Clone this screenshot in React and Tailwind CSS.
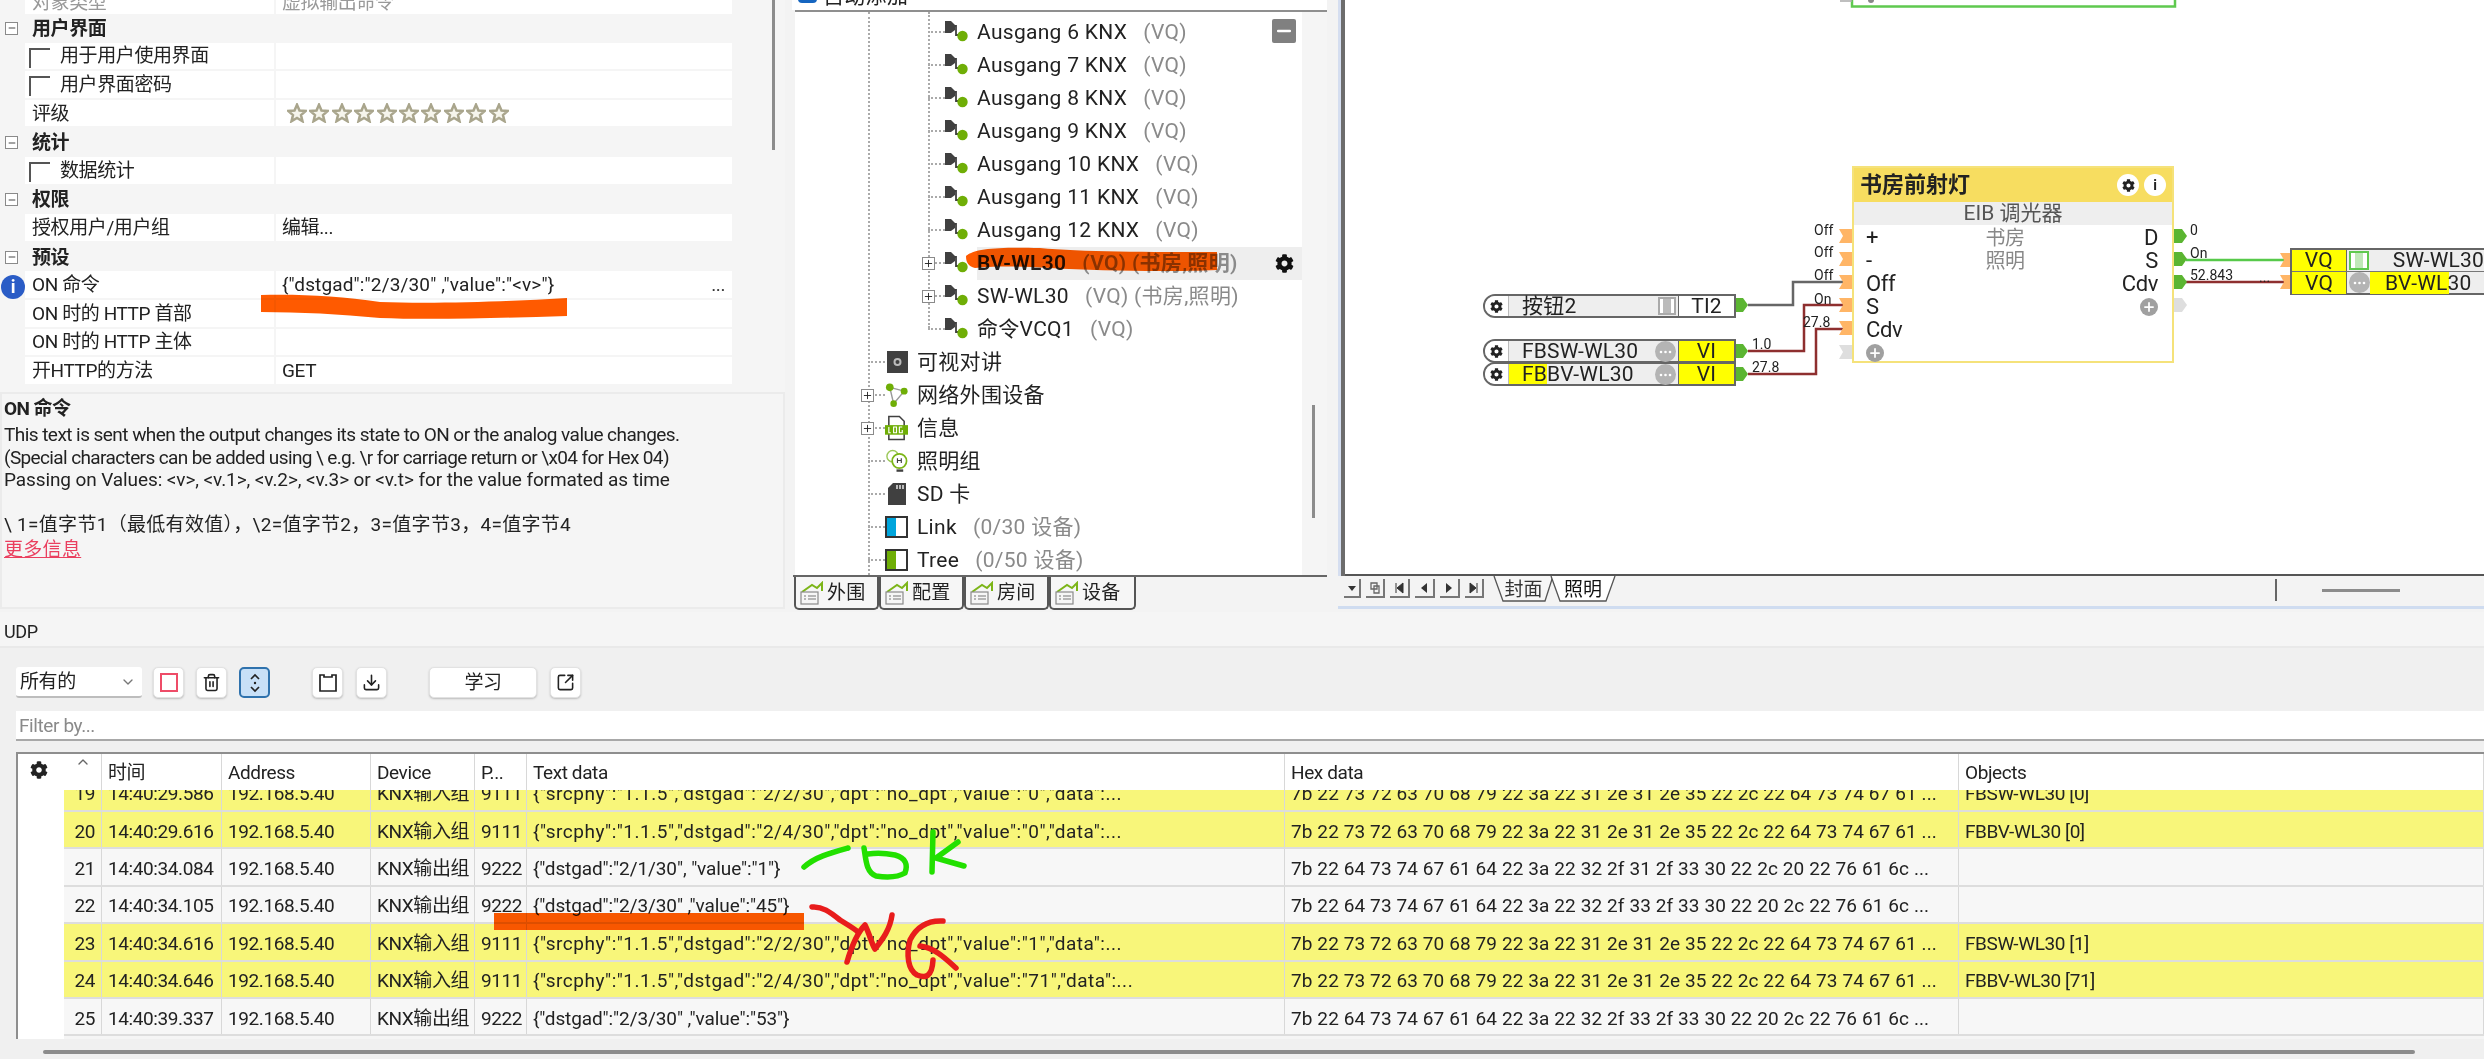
import React from 'react';
import { FaCog } from 'react-icons/fa';
import { ChevronDown, ChevronUp, Trash2, Download, SquareArrowOutUpRight, Plus, Minus } from 'lucide-react';

const Box = ({ minus }) => (
  <span className="flex h-[13px] w-[13px] items-center justify-center border border-[#8a8a8a] bg-white text-[#222]">
    {minus ? <Minus size={10} strokeWidth={2} /> : <Plus size={11} strokeWidth={2} />}
  </span>
);

const Star = () => (
  <svg width="20" height="20" viewBox="0 0 24 24" className="mr-[2.4px]">
    <path d="M12 2l3 7 7.5.6-5.7 4.9 1.8 7.4L12 18l-6.6 3.9 1.8-7.4L1.5 9.6 9 9z" fill="#f6f5ec" stroke="#a9a58c" strokeWidth="3" />
  </svg>
);

const Header = ({ t }) => (
  <div className="flex h-[28.6px] items-center bg-[#f5f5f5]">
    <div className="flex w-[32px] shrink-0 pl-[5px]"><Box minus /></div>
    <span className="font-bold">{t}</span>
  </div>
);

const Row = ({ l, v, check, children, info }) => (
  <div className="relative flex h-[28.6px] border-b-2 border-[#f5f5f5] bg-[#f5f5f5]">
    <div className="w-[25px] shrink-0" />
    <div className="flex w-[249px] shrink-0 items-center bg-white pl-[7px]">
      {check && <span className="mr-[10px] -ml-[3px] mt-[4px] h-[20px] w-[21px] border-l-2 border-t-2 border-[#555]" />}
      <span className={info ? 'relative z-10' : ''}>{l}</span>
    </div>
    <div className="w-[2px] shrink-0" />
    <div className="flex w-[456px] shrink-0 items-center bg-white pl-[6px]">{v}{children}</div>
  </div>
);

const OutIcon = () => (
  <svg width="23" height="24" viewBox="0 0 23 24" className="shrink-0">
    <path d="M0 1h6l4 4v5l-4 3H0z" fill="#404040" />
    <path d="M9 6h2v9h6" fill="none" stroke="#404040" strokeWidth="1.8" />
    <circle cx="17.5" cy="16" r="5.2" fill="#6fae06" />
  </svg>
);

const DotStub = () => <span className="h-0 w-[17px] shrink-0 border-t-2 border-dotted border-[#aaa]" />;

const Gray = ({ children }) => <span className="ml-[5px] text-[#8a8a8a]"> {children}</span>;

const L3 = ({ name, sub, plus, active }) => (
  <div className="relative flex h-[33px] items-center pl-[133px]">
    <DotStub />
    <OutIcon />
    {plus && <span className="absolute left-[127px] top-[10px]"><Box /></span>}
    <div className={active ? 'ml-[9px] flex h-[33px] flex-1 items-center bg-[#eeeeee] font-semibold' : 'ml-[9px] flex items-center'}>
      <span className="whitespace-pre">{name} <Gray>{sub}</Gray></span>
      {active && <FaCog className="ml-auto mr-[8px] text-[#111]" size={19} />}
    </div>
  </div>
);

const L2 = ({ icon, name, sub, plus }) => (
  <div className="relative flex h-[33px] items-center pl-[73px]">
    <DotStub />
    <span className="flex w-[23px] shrink-0 items-center justify-center">{icon}</span>
    {plus && <span className="absolute left-[66px] top-[10px]"><Box /></span>}
    <span className="ml-[9px] whitespace-pre">{name}{sub ? <Gray> {sub}</Gray> : null}</span>
  </div>
);

const IconCam = () => (
  <svg width="22" height="24" viewBox="0 0 22 24"><rect x="1" y="1" width="21" height="22" fill="#404040" /><circle cx="11.5" cy="12" r="3" fill="none" stroke="#bbb" strokeWidth="2" /></svg>
);
const IconNet = () => (
  <svg width="24" height="26" viewBox="0 0 24 26"><path d="M5 5L20 9 9 22z" fill="none" stroke="#999" strokeWidth="1.5" /><circle cx="5" cy="5" r="4" fill="#6fae06" /><circle cx="20" cy="9" r="3.6" fill="#6fae06" /><circle cx="9" cy="22" r="3.4" fill="#6fae06" /></svg>
);
const IconLog = () => (
  <svg width="24" height="26" viewBox="0 0 24 26"><path d="M4 1h11l5 5v19H4z" fill="#fff" stroke="#404040" strokeWidth="1.6" /><rect x="0" y="10" width="24" height="10" fill="#6fae06" /><path d="M4 12v6h2M9 12h3v6H9zM18 12h-3v6h3v-3" fill="none" stroke="#fff" strokeWidth="1.2" /></svg>
);
const IconBulb = () => (
  <svg width="24" height="26" viewBox="0 0 24 26"><circle cx="8" cy="8" r="6" fill="none" stroke="#9cc85a" strokeWidth="1.5" /><circle cx="15" cy="13" r="7.5" fill="#fff" stroke="#7cb518" strokeWidth="1.8" /><path d="M12 23h7" stroke="#404040" strokeWidth="2.5" /><path d="M13 10v5M17 10v5M13 12.5h4" stroke="#404040" strokeWidth="1.2" /></svg>
);
const IconSD = () => (
  <svg width="20" height="24" viewBox="0 0 20 24"><path d="M6 1h13v22H1V6z" fill="#404040" /><path d="M10 3v4M13 3v4M16 3v4" stroke="#fff" strokeWidth="1.3" /></svg>
);
const IconSplit = ({ c }) => (
  <span className="flex h-[22px] w-[23px] border-2 border-[#333] bg-white">
    <span className={c} />
  </span>
);

const TabIcon = () => (
  <svg width="24" height="24" viewBox="0 0 24 24" className="shrink-0">
    <path d="M2 11L12 4l5 3 5-5v8" fill="none" stroke="#7cb518" strokeWidth="2" />
    <rect x="1" y="11" width="17" height="12" fill="#f6f6f6" stroke="#8a8a8a" strokeWidth="1.2" />
    <path d="M4 15h2M8 15h8M4 18h2M8 18h8" stroke="#777" strokeWidth="1.2" />
  </svg>
);
const TreeTab = ({ t, w }) => (
  <div className={`${w} flex h-[33px] items-center gap-[3px] rounded-b-[5px] border-x-2 border-b-2 border-[#555] bg-[#f6f6f6] pl-[4px] text-[19px]`}>
    <TabIcon />
    {t}
  </div>
);

const NavBtn = ({ w, children }) => (
  <span className={`${w} flex h-[19px] shrink-0 items-center justify-center border-b-2 border-r-2 border-[#777] bg-[#f3f3f3]`}>
    <svg width="12" height="14" viewBox="0 0 12 14">{children}</svg>
  </span>
);

const ToolBtn = ({ w = 'w-[31px]', active, children }) => (
  <button className={`flex h-[31px] ${w} items-center justify-center rounded-[5px] ${active ? 'border-2 border-[#2f72ad] bg-[#c8e0f7]' : 'border border-[#e2e2e2] bg-white shadow-[0_1px_2px_#bbb]'} text-[#222]`}>
    {children}
  </button>
);

const Lbl = ({ className, children }) => <div className={`absolute whitespace-nowrap ${className}`}>{children}</div>;

const GearCap = () => (
  <span className="flex h-full w-[24px] shrink-0 items-center justify-center rounded-l-full border-r border-[#bbb] bg-white">
    <FaCog size={13} className="text-[#222]" />
  </span>
);
const Dots = () => (
  <span className="flex h-[21px] w-[21px] shrink-0 items-center justify-center rounded-full bg-[#b4b4b4]">
    <svg width="13" height="4" viewBox="0 0 13 4"><circle cx="2" cy="2" r="1.3" fill="#fff" /><circle cx="6.5" cy="2" r="1.3" fill="#fff" /><circle cx="11" cy="2" r="1.3" fill="#fff" /></svg>
  </span>
);

const HEX_A = '7b 22 73 72 63 70 68 79 22 3a 22 31 2e 31 2e 35 22 2c 22 64 73 74 67 61 ...';
const HEX_B = '7b 22 64 73 74 67 61 64 22 3a 22 32 2f 31 2f 33 30 22 2c 20 22 76 61 6c ...';
const HEX_C = '7b 22 64 73 74 67 61 64 22 3a 22 32 2f 33 2f 33 30 22 20 2c 22 76 61 6c ...';

const rows = [
  ['19', '14:40:29.586', 'KNX输入组', '9111', '{"srcphy":"1.1.5","dstgad":"2/2/30","dpt":"no_dpt","value":"0","data":...', HEX_A, 'FBSW-WL30 [0]', true],
  ['20', '14:40:29.616', 'KNX输入组', '9111', '{"srcphy":"1.1.5","dstgad":"2/4/30","dpt":"no_dpt","value":"0","data":...', HEX_A, 'FBBV-WL30 [0]', true],
  ['21', '14:40:34.084', 'KNX输出组', '9222', '{"dstgad":"2/1/30", "value":"1"}', HEX_B, '', false],
  ['22', '14:40:34.105', 'KNX输出组', '9222', '{"dstgad":"2/3/30" ,"value":"45"}', HEX_C, '', false],
  ['23', '14:40:34.616', 'KNX输入组', '9111', '{"srcphy":"1.1.5","dstgad":"2/2/30","dpt":"no_dpt","value":"1","data":...', HEX_A, 'FBSW-WL30 [1]', true],
  ['24', '14:40:34.646', 'KNX输入组', '9111', '{"srcphy":"1.1.5","dstgad":"2/4/30","dpt":"no_dpt","value":"71","data":...', HEX_A, 'FBBV-WL30 [71]', true],
  ['25', '14:40:39.337', 'KNX输出组', '9222', '{"dstgad":"2/3/30" ,"value":"53"}', HEX_C, '', false],
];

const GRID = 'grid grid-cols-[38px_120px_149px_104px_52px_758px_674px_1fr]';
const Cell = ({ className = '', children }) => (
  <div className={`flex items-center overflow-hidden whitespace-nowrap border-r-[1.5px] border-[#d8d8d8] pl-[6px] ${className}`}>{children}</div>
);
const DataCell = ({ className = '', children }) => <Cell className={`pt-[3px] ${className}`}>{children}</Cell>;

export default function App() {
  return (
    <div className="relative h-[1059px] w-[2484px] overflow-hidden bg-[#f3f3f3] font-['Roboto','Noto_Sans_CJK_SC',sans-serif] text-[19px] leading-none tracking-[-0.4px] text-[#222] blur-[0.4px]">
      {/* top */}
      <div className="flex h-[612px]">
        {/* property column */}
        <div className="flex w-[785px] shrink-0 flex-col">
          <div className="relative h-[392px] overflow-hidden bg-[#f5f5f5]">
            <div className="flex h-[14px] overflow-hidden bg-[#f5f5f5]">
              <div className="w-[25px]" />
              <div className="h-[14px] w-[249px] overflow-hidden bg-white pl-[7px] text-[#999]"><div className="-mt-[7px]">对象类型</div></div>
              <div className="w-[2px]" />
              <div className="h-[14px] w-[456px] overflow-hidden bg-white pl-[6px] text-[#999]"><div className="-mt-[7px]">虚拟输出命令</div></div>
            </div>
            <Header t="用户界面" />
            <Row l="用于用户使用界面" check />
            <Row l="用户界面密码" check />
            <Row l="评级">
              <div className="flex pl-[5px]">{[0,1,2,3,4,5,6,7,8,9].map(i => <Star key={i} />)}</div>
            </Row>
            <Header t="统计" />
            <Row l="数据统计" check />
            <Header t="权限" />
            <Row l="授权用户/用户组" v="编辑..." />
            <Header t="预设" />
            <Row l="ON 命令" v={<span className="tracking-[0.15px]">{'{"dstgad":"2/3/30" ,"value":"<v>"}'}</span>} info>
              <span className="ml-auto mr-[7px] text-[#333]">...</span>
            </Row>
            <Row l="ON 时的 HTTP 首部" />
            <Row l="ON 时的 HTTP 主体" />
            <Row l="开HTTP的方法" v="GET" />
            <span className="absolute left-[1px] top-[275px] flex h-[24px] w-[24px] items-center justify-center rounded-full bg-[#2a5cc6] text-[18px] font-bold text-white">i</span>
            <span className="absolute left-[772px] top-0 h-[150px] w-[3px] bg-[#8c8c8c]" />
          </div>
          <div className="h-[217px] border-2 border-[#ebebeb] bg-[#f5f5f5] pl-[2px] pt-[4px] tracking-[-0.55px]">
            <div className="h-[22px] font-bold leading-[22px]">ON 命令</div>
            <div className="mt-[4px] leading-[22.5px]">This text is sent when the output changes its state to ON or the analog value changes.</div>
            <div className="leading-[22.5px] tracking-[-0.62px]">(Special characters can be added using \ e.g. \r for carriage return or \x04 for Hex 04)</div>
            <div className="leading-[22.5px] tracking-[-0.1px]">Passing on Values: &lt;v&gt;, &lt;v.1&gt;, &lt;v.2&gt;, &lt;v.3&gt; or &lt;v.t&gt; for the value formated as time</div>
            <div className="mt-[22.5px] leading-[22.5px] tracking-[0.3px]">\ 1=值字节1（最低有效值），\2=值字节2，3=值字节3，4=值字节4</div>
            <div className="mt-[2px] leading-[22.5px] tracking-[0.3px] text-[#ea3f5f] underline">更多信息</div>
          </div>
        </div>

        {/* tree column */}
        <div className="ml-[7px] flex w-[541px] shrink-0 flex-col pr-[6px] text-[21px] tracking-[0.3px]">
          <div className="flex h-[10px] items-start overflow-hidden bg-white pl-[6px]">
            <span className="-mt-[12px] h-[15px] w-[19px] rounded-[4px] bg-[#1565c0]" />
            <span className="-mt-[16px] ml-[6px] leading-[24px]">自动添加</span>
          </div>
          <div className="ml-[3px] h-[2px] bg-[#8f8f8f]" />
          <div className="relative ml-[3px] flex h-[563px] bg-[#fbfbfb]">
            <div className="relative h-[563px] w-[507px] overflow-hidden bg-white pt-[3.5px]">
              <span className="absolute left-[73px] top-0 h-[563px] border-l-2 border-dotted border-[#aaa]" />
              <span className="absolute left-[133px] top-0 h-[316px] border-l-2 border-dotted border-[#aaa]" />
              <L3 name="Ausgang 6 KNX" sub="(VQ)" />
              <L3 name="Ausgang 7 KNX" sub="(VQ)" />
              <L3 name="Ausgang 8 KNX" sub="(VQ)" />
              <L3 name="Ausgang 9 KNX" sub="(VQ)" />
              <L3 name="Ausgang 10 KNX" sub="(VQ)" />
              <L3 name="Ausgang 11 KNX" sub="(VQ)" />
              <L3 name="Ausgang 12 KNX" sub="(VQ)" />
              <L3 name="BV-WL30" sub="(VQ) (书房,照明)" plus active />
              <L3 name="SW-WL30" sub="(VQ) (书房,照明)" plus />
              <L3 name="命令VCQ1" sub="(VQ)" />
              <L2 icon={<IconCam />} name="可视对讲" />
              <L2 icon={<IconNet />} name="网络外围设备" plus />
              <L2 icon={<IconLog />} name="信息" plus />
              <L2 icon={<IconBulb />} name="照明组" />
              <L2 icon={<IconSD />} name="SD 卡" />
              <L2 icon={<IconSplit c="w-[9px] bg-[#00a5dc]" />} name="Link" sub="(0/30 设备)" />
              <L2 icon={<IconSplit c="w-[9px] bg-[#6fae06]" />} name="Tree" sub="(0/50 设备)" />
              <span className="absolute left-[477px] top-[7px] flex h-[24px] w-[24px] items-center justify-center rounded-[2px] bg-[#808080] text-white"><Minus size={20} strokeWidth={3} /></span>
            </div>
            <div className="relative flex-1 bg-[#f5f5f5]">
              <span className="absolute left-[10px] top-[393px] h-[113px] w-[3px] bg-[#8c8c8c]" />
            </div>
          </div>
          <div className="ml-[1px] flex border-t-2 border-[#666] pl-[1px]">
            <TreeTab t="外围" w="w-[85px]" />
            <TreeTab t="配置" w="w-[85px]" />
            <TreeTab t="房间" w="w-[85px]" />
            <TreeTab t="设备" w="w-[87px]" />
          </div>
        </div>

        {/* canvas column */}
        <div className="ml-[5px] flex min-w-0 flex-1 flex-col">
          <div className="flex h-[576px]">
            <span className="w-[3px] shrink-0 bg-[#d5def0]" />
            <span className="w-[4px] shrink-0 bg-[#6c6c6c]" />
            <div className="relative flex-1 border-b-2 border-[#555] bg-white text-[14px] tracking-normal">
              <svg width="1139" height="576" viewBox="1345 0 1139 576" className="absolute left-0 top-0">
                <path d="M1852 0v6.5h323V0" fill="none" stroke="#5fc94f" strokeWidth="2.5" />
                <path d="M1840 1h12" stroke="#aaa" strokeWidth="1.5" />
                <circle cx="1871" cy="0" r="3" fill="#888" />
                {/* wires */}
                <path d="M1748 305h45v-23h52" fill="none" stroke="#666" strokeWidth="2.5" />
                <path d="M1748 351h56v-46h41" fill="none" stroke="#8e2f2f" strokeWidth="2.5" />
                <path d="M1748 374h68v-45h29" fill="none" stroke="#8e2f2f" strokeWidth="2.5" />
                <path d="M2186 260h99" fill="none" stroke="#57c94a" strokeWidth="2.5" />
                <path d="M2186 282h99" fill="none" stroke="#8e2f2f" strokeWidth="2.5" />
                {/* connectors */}
                {[236, 259, 282, 305, 328].map(y => (
                  <path key={y} d={`M1839 ${y - 7}h13v14h-13l4-7z`} fill="#ffb566" />
                ))}
                <path d="M1839 345h13v14h-13l4-7z" fill="#dedede" />
                {[236, 259, 282].map(y => (
                  <path key={y} d={`M2174 ${y - 7}h8l5 7-5 7h-8z`} fill="#5bb531" />
                ))}
                <path d="M2174 298h8l5 7-5 7h-8z" fill="#dedede" />
                {[260, 282].map(y => (
                  <path key={y} d={`M2280 ${y - 7}h10v14h-10l4-7z`} fill="#ffb566" />
                ))}
                {[305, 351, 374].map(y => (
                  <path key={y} d={`M1736 ${y - 7}h7l5 7-5 7h-7z`} fill="#5bb531" />
                ))}
              </svg>

              {/* function block */}
              <div className="absolute left-[507px] top-[166px] flex h-[197px] w-[322px] flex-col border-2 border-[#f5e27a] bg-white">
                <div className="flex h-[34px] shrink-0 items-center bg-[#f7dd60] pl-[6px] pr-[6px] text-[22px] font-bold tracking-[0]">
                  <span>书房前射灯</span>
                  <span className="ml-auto flex h-[22px] w-[22px] items-center justify-center rounded-full bg-white"><FaCog size={13} /></span>
                  <span className="ml-[5px] flex h-[22px] w-[22px] items-center justify-center rounded-full bg-white text-[14px] font-bold">i</span>
                </div>
                <div className="flex h-[23px] shrink-0 items-center justify-center bg-[#eeeeee] text-[21px] tracking-[0] text-[#555]">EIB 调光器</div>
                <div className="flex flex-1 justify-between pl-[12px] pr-[14px] pt-[1px] text-[22px] tracking-[-0.4px]">
                  <div className="flex flex-col">
                    <div className="flex h-[23px] items-center">+</div>
                    <div className="flex h-[23px] items-center">-</div>
                    <div className="flex h-[23px] items-center">Off</div>
                    <div className="flex h-[23px] items-center">S</div>
                    <div className="flex h-[23px] items-center">Cdv</div>
                    <div className="flex h-[23px] items-center"><span className="flex h-[18px] w-[18px] items-center justify-center rounded-full bg-[#a0a0a0] text-white"><Plus size={14} strokeWidth={3} /></span></div>
                  </div>
                  <div className="flex flex-col items-center pr-[14px] text-[20px] text-[#888]">
                    <div className="flex h-[23px] items-center">书房</div>
                    <div className="flex h-[23px] items-center">照明</div>
                  </div>
                  <div className="flex flex-col items-end">
                    <div className="flex h-[23px] items-center">D</div>
                    <div className="flex h-[23px] items-center">S</div>
                    <div className="flex h-[23px] items-center">Cdv</div>
                    <div className="flex h-[23px] items-center"><span className="flex h-[18px] w-[18px] items-center justify-center rounded-full bg-[#a0a0a0] text-white"><Plus size={14} strokeWidth={3} /></span></div>
                  </div>
                </div>
              </div>

              {/* wire values */}
              <Lbl className="left-[469px] top-[223px]">Off</Lbl>
              <Lbl className="left-[469px] top-[245px]">Off</Lbl>
              <Lbl className="left-[469px] top-[268px]">Off</Lbl>
              <Lbl className="left-[469px] top-[292px]">On</Lbl>
              <Lbl className="left-[458px] top-[315px]">27.8</Lbl>
              <Lbl className="left-[845px] top-[223px]">0</Lbl>
              <Lbl className="left-[845px] top-[246px]">On</Lbl>
              <Lbl className="left-[845px] top-[268px]">52.843</Lbl>
              <Lbl className="left-[914px] top-[270px]">...</Lbl>
              <Lbl className="left-[407px] top-[337px]">1.0</Lbl>
              <Lbl className="left-[407px] top-[360px]">27.8</Lbl>

              {/* input blocks */}
              <div className="absolute left-[138px] top-[294px] flex h-[24px] w-[253px] rounded-l-full border-2 border-[#666] bg-[#eeeeee] text-[21px] tracking-[0.2px]">
                <GearCap />
                <span className="flex flex-1 items-center pl-[13px]">按钮2</span>
                <span className="mr-[2px] mt-[1px] flex h-[18px] w-[18px] items-center justify-center border-2 border-[#aaa] bg-white"><span className="h-full w-[8px] bg-[#bbb]" /></span>
                <span className="flex w-[56px] items-center justify-center border-l border-[#666] bg-white">TI2</span>
              </div>
              <div className="absolute left-[138px] top-[339px] flex h-[24px] w-[253px] rounded-l-full border-2 border-[#666] bg-[#eeeeee] text-[21px] tracking-[0.2px]">
                <GearCap />
                <span className="flex flex-1 items-center pl-[13px]">FBSW-WL30</span>
                <Dots />
                <span className="ml-[2px] flex w-[56px] items-center justify-center border-l border-[#666] bg-[#ffff00]">VI</span>
              </div>
              <div className="absolute left-[138px] top-[362px] flex h-[24px] w-[253px] rounded-l-full border-2 border-[#666] bg-[#eeeeee] text-[21px] tracking-[0.2px]">
                <GearCap />
                <span className="flex flex-1 items-center pl-[13px]"><span className="-ml-[13px] flex h-full items-center bg-[#ffff00] pl-[13px]">FB</span>BV-WL30</span>
                <Dots />
                <span className="ml-[2px] flex w-[56px] items-center justify-center border-l border-[#666] bg-[#ffff00]">VI</span>
              </div>

              {/* output block */}
              <div className="absolute left-[945px] top-[248px] flex h-[47px] w-[194px] flex-col border-y-2 border-l-2 border-[#666] bg-[#eeeeee] text-[21px] tracking-[0.2px]">
                <div className="flex h-[22px] border-b border-[#777]">
                  <span className="flex w-[55px] items-center justify-center border-r border-[#666] bg-[#ffff00]">VQ</span>
                  <span className="ml-[2px] mt-[1px] flex h-[19px] w-[20px] items-center justify-center border-2 border-[#5fc94f] bg-white"><span className="h-full w-[8px] bg-[#bfe8b8]" /></span>
                  <span className="ml-[24px] flex items-center whitespace-nowrap">SW-WL30</span>
                </div>
                <div className="flex flex-1">
                  <span className="flex w-[55px] items-center justify-center border-r border-[#666] bg-[#ffff00]">VQ</span>
                  <span className="ml-[2px]"><Dots /></span>
                  <span className="flex items-center"><span className="flex h-[22px] w-[79px] items-center overflow-visible whitespace-nowrap bg-[#ffff00] pl-[15px]">BV-WL30</span></span>
                </div>
              </div>
            </div>
          </div>
          {/* sheet bar */}
          <div className="flex h-[30px] pl-[6px]">
            <div className="flex items-start gap-[5px] pt-[3px]">
              <NavBtn w="w-[17px]"><path d="M2 5h8l-4 5z" fill="#333" /></NavBtn>
              <NavBtn w="w-[19px]"><path d="M2 2h6v6H2zM5 5h5v7H5z" fill="none" stroke="#666" strokeWidth="1.3" /></NavBtn>
              <NavBtn w="w-[20px]"><path d="M3 2v10M10 2v10L4 7z" fill="#333" stroke="#333" strokeWidth="1" /></NavBtn>
              <NavBtn w="w-[20px]"><path d="M9 2v10L3 7z" fill="#333" /></NavBtn>
              <NavBtn w="w-[20px]"><path d="M3 2v10l6-5z" fill="#333" /></NavBtn>
              <NavBtn w="w-[19px]"><path d="M9 2v10M2 2v10l6-5z" fill="#333" stroke="#333" strokeWidth="1" /></NavBtn>
            </div>
            <div className="relative ml-[9px] flex">
              <div className="relative flex h-[26px] w-[61px] items-center justify-center text-[19px] tracking-[0] text-[#333]">
                <svg width="61" height="26" viewBox="0 0 61 26" className="absolute left-0 top-0"><path d="M1 0l9 25h42L60 0" fill="#f6f6f6" stroke="#555" strokeWidth="1.3" /></svg>
                <span className="relative">封面</span>
              </div>
              <div className="relative -ml-[4px] flex h-[26px] w-[66px] items-center justify-center text-[19px] tracking-[0] text-[#111]">
                <svg width="66" height="26" viewBox="0 0 66 26" className="absolute left-0 top-0"><path d="M1 0l9 25h46L65 0" fill="#fff" stroke="#555" strokeWidth="1.3" /></svg>
                <span className="relative">照明</span>
              </div>
            </div>
            <div className="ml-[659px] mt-[3px] flex h-[22px] w-[120px] items-center border-l-2 border-[#666] pl-[45px]">
              <span className="h-[3px] w-[78px] shrink-0 bg-[#8c8c8c]" />
            </div>
          </div>
          <div className="h-[3px] bg-[#cfdcf0]" />
        </div>
      </div>

      {/* UDP */}
      <div className="flex h-[36px] items-center border-b-2 border-[#e9e9e9] bg-[#f5f5f5] pl-[4px] pt-[5px] text-[18px]">UDP</div>
      <div className="flex h-[411px] flex-col bg-[#f0f0f0] pl-[16px] pt-[19px]">
        <div className="flex h-[31px] items-center">
          <div className="flex h-[31px] w-[126px] items-center justify-between rounded-[3px] border-b-2 border-[#bdbdbd] bg-white pl-[4px] pr-[6px]">
            所有的 <ChevronDown size={16} className="text-[#777]" />
          </div>
          <div className="ml-[11px]"><ToolBtn><span className="h-[19px] w-[18px] border-2 border-[#ee4c68]" /></ToolBtn></div>
          <div className="ml-[12px]"><ToolBtn><Trash2 size={19} /></ToolBtn></div>
          <div className="ml-[12px]"><ToolBtn active>
            <svg width="18" height="22" viewBox="0 0 18 22" fill="none" stroke="#222" strokeWidth="1.7"><path d="M5 7l4-4 4 4M5 15l4 4 4-4" /><circle cx="9" cy="11" r="1.2" fill="#222" stroke="none" /></svg>
          </ToolBtn></div>
          <div className="ml-[42px]"><ToolBtn>
            <svg width="18" height="20" viewBox="0 0 18 20" fill="none" stroke="#222" strokeWidth="1.7"><path d="M1 2h4v2h8V2h4v16H1z" /></svg>
          </ToolBtn></div>
          <div className="ml-[13px]"><ToolBtn><Download size={19} /></ToolBtn></div>
          <div className="ml-[42px]"><ToolBtn w="w-[108px]"><span className="text-[19px]">学习</span></ToolBtn></div>
          <div className="ml-[13px]"><ToolBtn><SquareArrowOutUpRight size={19} /></ToolBtn></div>
        </div>
        <div className="mt-[13px] flex h-[30px] items-center border-b-2 border-[#a8a8a8] bg-white pl-[3px] text-[#8a8a8a]">Filter by...</div>
        <div className="mt-[11px] flex h-[287px] border-l-2 border-t-2 border-[#8e8e8e] bg-white">
          <div className="w-[46px] shrink-0 bg-white pl-[12px] pt-[7px]"><FaCog size={18} className="text-[#222]" /></div>
          <div className="min-w-0 flex-1">
            <div className={`${GRID} h-[36px] bg-white`}>
              <Cell className="relative"><ChevronUp size={16} className="absolute left-[11px] top-0 text-[#666]" /></Cell>
              <Cell>时间</Cell>
              <Cell>Address</Cell>
              <Cell>Device</Cell>
              <Cell>P...</Cell>
              <Cell>Text data</Cell>
              <Cell>Hex data</Cell>
              <Cell className="border-r-0">Objects</Cell>
            </div>
            <div className="h-[249px] overflow-hidden bg-[#f5f5f5]">
              <div className="-mt-[15.4px]">
                {rows.map(r => (
                  <div key={r[0]} className={`${GRID} h-[37.4px] border-b-2 border-[#dddddd] ${r[7] ? 'bg-[#f8f67a]' : 'bg-[#f7f7f7]'}`}>
                    <DataCell className="justify-end pr-[6px]">{r[0]}</DataCell>
                    <DataCell>{r[1]}</DataCell>
                    <DataCell>192.168.5.40</DataCell>
                    <DataCell>{r[2]}</DataCell>
                    <DataCell>{r[3]}</DataCell>
                    <DataCell className={r[7] ? 'tracking-[0.5px]' : 'tracking-[-0.1px]'}>{r[4]}</DataCell>
                    <DataCell className="tracking-[0.1px]">{r[5]}</DataCell>
                    <DataCell className="border-r-0">{r[6]}</DataCell>
                  </div>
                ))}
              </div>
            </div>
          </div>
        </div>
        <div className="ml-[27px] mt-[11px] h-[4px] w-[2372px] rounded-full bg-[#8c8c8c]" />
      </div>

      {/* hand-drawn annotations lying over the screenshot */}
      <svg width="2484" height="1059" viewBox="0 0 2484 1059" className="pointer-events-none absolute left-0 top-0">
        <g className="mix-blend-multiply" fill="#ff5a00">
          <path d="M261 295C300 294 340 296 380 302C430 304 500 302 567 298V316C500 318 430 320 380 318C340 314 300 312 261 312Z" />
          <path d="M966 256C975 248 1000 247 1040 248C1080 252 1150 252 1217 252V270C1170 272 1100 271 1050 268C1020 266 990 266 975 268C968 266 966 262 966 256Z" />
          <rect x="494" y="913" width="310" height="17" />
        </g>
        <g fill="none" strokeLinecap="round" strokeLinejoin="round" strokeWidth="5.5">
          <g stroke="#22e000">
            <path d="M804 867C815 857 830 853 848 848" />
            <path d="M864 848C866 860 866 872 876 876C890 878 900 876 905 873C908 865 906 858 895 855C885 853 875 853 868 854" />
            <path d="M933 832L932 872" />
            <path d="M958 842L936 858L964 866" />
          </g>
          <g stroke="#e81c1c">
            <path d="M812 907C822 906 830 912 840 920C848 925 855 929 858 932" />
            <path d="M847 962C852 945 858 932 865 925C870 935 872 945 875 949C882 940 890 930 892 915" />
            <path d="M943 921C925 920 915 930 910 940C906 955 908 970 917 975C925 978 932 978 933 960" />
            <path d="M920 946C935 948 945 958 956 968" />
          </g>
        </g>
      </svg>
    </div>
  );
}
